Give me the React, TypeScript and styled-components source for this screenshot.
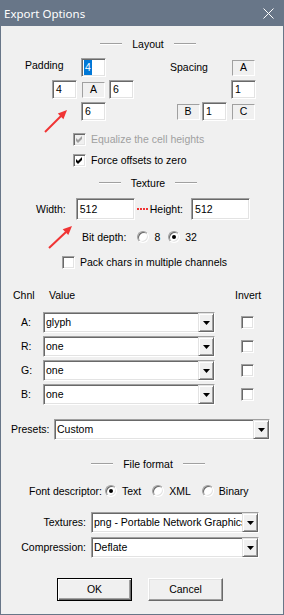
import React from "react";
import styled, { createGlobalStyle } from "styled-components";

const FRAME = "#687688";
const FACE = "#f0f0f0";
const SHADOW = "#a0a0a0";
const DARK = "#696969";
const LIGHT = "#e3e3e3";
const RED = "#f03434";

const GlobalStyle = createGlobalStyle`
  html, body { margin: 0; padding: 0; background: ${FACE}; }
  body {
    font-family: "Liberation Sans", Arial, sans-serif;
    font-size: 10.5px;
    color: #000;
  }
  * { box-sizing: border-box; }
`;

const Window = styled.div`
  position: relative;
  width: 284px;
  height: 615px;
  display: flex;
  flex-direction: column;
  overflow: hidden;
`;

const TitleBar = styled.div`
  flex: none;
  height: 26px;
  background: ${FRAME};
  display: flex;
  align-items: center;
  justify-content: space-between;
  padding: 0 10px 0 4px;
`;

const Title = styled.span`
  font-family: "Noto Sans", "Liberation Sans", sans-serif;
  font-size: 11.5px;
  color: #fff;
`;

const Body = styled.div`
  flex: 1;
  background: ${FACE};
  border: 1px solid ${FRAME};
  border-top: none;
  display: flex;
  flex-direction: column;
  line-height: 13px;
`;

const SectionHeader = styled.div<{ $mt: number }>`
  margin-top: ${(p) => p.$mt}px;
  height: 14px;
  padding-left: 12px;
  display: flex;
  align-items: center;
  justify-content: center;
  gap: 10px;
`;

const Rule = styled.span`
  width: 22px;
  height: 2px;
  border-top: 1px solid ${SHADOW};
  border-bottom: 1px solid #fff;
`;

const LayoutArea = styled.div`
  margin-top: 7px;
  height: 63px;
  padding-left: 24px;
  display: flex;
  gap: 36px;
`;

const CrossGrid = styled.div<{ $cols: string }>`
  display: grid;
  grid-template-columns: ${(p) => p.$cols};
  grid-template-rows: 19px 19px 19px;
  row-gap: 3px;
`;

const GroupLabel = styled.span<{ $cols: string; $mt: number }>`
  grid-row: 1;
  grid-column: ${(p) => p.$cols};
  align-self: start;
  margin-top: ${(p) => p.$mt}px;
`;

const sunken = `
  border: 1px solid;
  border-color: ${SHADOW} #fff #fff ${SHADOW};
  box-shadow: inset 1px 1px ${DARK}, inset -1px -1px ${LIGHT};
`;

const EditBox = styled.div<{ $w: number; $h: number; $area?: string; $ml?: number }>`
  ${(p) => (p.$area ? `grid-area: ${p.$area};` : "")}
  margin-left: ${(p) => p.$ml ?? 0}px;
  flex: none;
  width: ${(p) => p.$w}px;
  height: ${(p) => p.$h}px;
  background: #fff;
  ${sunken}
  padding-left: 3px;
  display: flex;
  align-items: center;
`;

const Selected = styled.span`
  background: #0078d7;
  color: #fff;
  height: 15px;
  line-height: 15px;
  padding: 0 1px;
  margin-left: -1px;
`;

const StaticBox = styled.div<{ $area: string }>`
  grid-area: ${(p) => p.$area};
  justify-self: center;
  align-self: center;
  width: 23px;
  height: 16px;
  border: 1px solid;
  border-color: ${SHADOW} #fff #fff ${SHADOW};
  display: flex;
  align-items: center;
  justify-content: center;
`;

const CheckRow = styled.div<{ $mt: number; $pl: number; $disabled?: boolean }>`
  margin-top: ${(p) => p.$mt}px;
  padding-left: ${(p) => p.$pl}px;
  height: 13px;
  display: flex;
  align-items: center;
  gap: 5px;
  color: ${(p) => (p.$disabled ? SHADOW : "#000")};
`;

const CheckBoxFrame = styled.span<{ $disabled?: boolean; $ml?: number }>`
  flex: none;
  margin-left: ${(p) => p.$ml ?? 0}px;
  width: 13px;
  height: 13px;
  background: ${(p) => (p.$disabled ? FACE : "#fff")};
  ${sunken}
  display: flex;
  align-items: center;
  justify-content: center;
`;

const CheckBox = ({ checked, disabled, ml }: { checked?: boolean; disabled?: boolean; ml?: number }) => (
  <CheckBoxFrame $disabled={disabled} $ml={ml}>
    {checked && (
      <svg width="7" height="7" viewBox="0 0 7 7">
        <polygon points="0,2 2,4 6,0 6,3 2,7 0,5" fill={disabled ? SHADOW : "#000"} />
      </svg>
    )}
  </CheckBoxFrame>
);

const SizeRow = styled.div`
  margin-top: 8px;
  height: 22px;
  padding-left: 35px;
  display: flex;
  align-items: center;
`;

const Label = styled.span<{ $ml?: number }>`
  margin-left: ${(p) => p.$ml ?? 0}px;
  white-space: nowrap;
`;

const Leader = styled.span`
  margin-left: 2px;
  width: 11px;
  height: 2px;
  background: repeating-linear-gradient(to right, ${RED} 0 2px, transparent 2px 3px);
`;

const RadioRow = styled.div<{ $mt: number; $pl: number }>`
  margin-top: ${(p) => p.$mt}px;
  padding-left: ${(p) => p.$pl}px;
  height: 14px;
  display: flex;
  align-items: center;
`;

const Option = styled.span<{ $ml: number }>`
  margin-left: ${(p) => p.$ml}px;
  display: flex;
  align-items: center;
  gap: 5px;
`;

const RadioDot = styled.span<{ $checked?: boolean }>`
  flex: none;
  width: 12px;
  height: 12px;
  border-radius: 50%;
  background: #fff;
  ${sunken}
  display: flex;
  align-items: center;
  justify-content: center;
  &::after {
    content: "";
    width: 4px;
    height: 4px;
    border-radius: 50%;
    background: #000;
    display: ${(p) => (p.$checked ? "block" : "none")};
  }
`;

const ChannelTable = styled.div`
  margin-top: 19px;
  padding-left: 12px;
  display: flex;
  flex-direction: column;
  gap: 3px;
`;

const ChannelHead = styled.div`
  display: grid;
  grid-template-columns: 36px 186px auto;
  height: 14px;
  align-items: center;
  margin-bottom: 7px;
`;

const ChannelRow = styled.div`
  display: grid;
  grid-template-columns: 30px 172px 26px 13px;
  height: 21px;
  align-items: center;
`;

const RowLabel = styled.span`
  padding-left: 8px;
`;

const ComboFrame = styled.div<{ $w: number }>`
  width: ${(p) => p.$w}px;
  height: 21px;
  background: #fff;
  ${sunken}
  display: flex;
  align-items: stretch;
`;

const ComboText = styled.span`
  flex: 1;
  min-width: 0;
  overflow: hidden;
  white-space: nowrap;
  padding-left: 2px;
  display: flex;
  align-items: center;
`;

const DropButton = styled.span`
  flex: none;
  width: 16px;
  background: ${FACE};
  border: 1px solid;
  border-color: ${LIGHT} ${DARK} ${DARK} ${LIGHT};
  box-shadow: inset 1px 1px #fff, inset -1px -1px ${SHADOW};
  display: flex;
  align-items: center;
  justify-content: center;
`;

const Combo = ({ w, value }: { w: number; value: string }) => (
  <ComboFrame $w={w}>
    <ComboText>{value}</ComboText>
    <DropButton>
      <svg width="7" height="4" viewBox="0 0 7 4">
        <polygon points="0,0 7,0 3.5,4" fill="#000" />
      </svg>
    </DropButton>
  </ComboFrame>
);

const FieldRow = styled.div<{ $mt: number; $pl: number; $cols: string }>`
  margin-top: ${(p) => p.$mt}px;
  padding-left: ${(p) => p.$pl}px;
  height: 21px;
  display: grid;
  grid-template-columns: ${(p) => p.$cols};
  column-gap: 5px;
  align-items: center;
`;

const FieldLabel = styled.span<{ $right?: boolean }>`
  text-align: ${(p) => (p.$right ? "right" : "left")};
  white-space: nowrap;
`;

const ButtonRow = styled.div`
  margin-top: 20px;
  padding-left: 56px;
  display: flex;
  gap: 16px;
`;

const PushButton = styled.button<{ $default?: boolean }>`
  width: 75px;
  height: 23px;
  padding: 0;
  font: inherit;
  color: #000;
  background: ${FACE};
  border: 1px solid;
  border-color: ${(p) => (p.$default ? "#000" : `#fff ${DARK} ${DARK} #fff`)};
  box-shadow: ${(p) =>
    p.$default
      ? `inset 1px 1px #fff, inset -1px -1px ${DARK}, inset -2px -2px ${SHADOW}`
      : `inset -1px -1px ${SHADOW}, inset 1px 1px ${LIGHT}`};
`;

const Annotations = styled.svg`
  position: absolute;
  left: 0;
  top: 0;
  pointer-events: none;
`;

export default function App() {
  return (
    <>
      <GlobalStyle />
      <Window>
        <TitleBar>
          <Title>Export Options</Title>
          <svg width="11" height="11" viewBox="0 0 11 11">
            <path d="M0.5 0.5 L10.5 10.5 M10.5 0.5 L0.5 10.5" stroke="#fff" strokeWidth="1" />
          </svg>
        </TitleBar>
        <Body>
          <SectionHeader $mt={11}>
            <Rule />
            <span>Layout</span>
            <Rule />
          </SectionHeader>

          <LayoutArea>
            <CrossGrid $cols="27px 25px 4px 25px 3px 25px">
              <GroupLabel $cols="1 / 4" $mt={1}>Padding</GroupLabel>
              <EditBox $w={25} $h={19} $area="1 / 4">
                <Selected>4</Selected>
              </EditBox>
              <EditBox $w={25} $h={19} $area="2 / 2">4</EditBox>
              <StaticBox $area="2 / 4">A</StaticBox>
              <EditBox $w={25} $h={19} $area="2 / 6">6</EditBox>
              <EditBox $w={25} $h={19} $area="3 / 4">6</EditBox>
            </CrossGrid>
            <CrossGrid $cols="7px 22px 3px 25px 4px 25px">
              <GroupLabel $cols="1 / 5" $mt={3}>Spacing</GroupLabel>
              <StaticBox $area="1 / 6">A</StaticBox>
              <EditBox $w={25} $h={19} $area="2 / 6">1</EditBox>
              <StaticBox $area="3 / 2">B</StaticBox>
              <EditBox $w={25} $h={19} $area="3 / 4">1</EditBox>
              <StaticBox $area="3 / 6">C</StaticBox>
            </CrossGrid>
          </LayoutArea>

          <CheckRow $mt={12} $pl={72} $disabled>
            <CheckBox checked disabled />
            <span>Equalize the cell heights</span>
          </CheckRow>
          <CheckRow $mt={8} $pl={72}>
            <CheckBox checked />
            <span>Force offsets to zero</span>
          </CheckRow>

          <SectionHeader $mt={9}>
            <Rule />
            <span>Texture</span>
            <Rule />
          </SectionHeader>

          <SizeRow>
            <Label>Width:</Label>
            <EditBox $w={59} $h={22} $ml={10}>512</EditBox>
            <Leader />
            <Label $ml={2}>Height:</Label>
            <EditBox $w={59} $h={22} $ml={8}>512</EditBox>
          </SizeRow>

          <RadioRow $mt={10} $pl={81}>
            <Label>Bit depth:</Label>
            <Option $ml={11}>
              <RadioDot />
              <span>8</span>
            </Option>
            <Option $ml={8}>
              <RadioDot $checked />
              <span>32</span>
            </Option>
          </RadioRow>

          <CheckRow $mt={12} $pl={61}>
            <CheckBox />
            <span>Pack chars in multiple channels</span>
          </CheckRow>

          <ChannelTable>
            <ChannelHead>
              <span>Chnl</span>
              <span>Value</span>
              <span>Invert</span>
            </ChannelHead>
            {[
              ["A:", "glyph"],
              ["R:", "one"],
              ["G:", "one"],
              ["B:", "one"],
            ].map(([ch, val]) => (
              <ChannelRow key={ch}>
                <RowLabel>{ch}</RowLabel>
                <Combo w={172} value={val} />
                <span />
                <CheckBox />
              </ChannelRow>
            ))}
          </ChannelTable>

          <FieldRow $mt={14} $pl={10} $cols="38px 216px">
            <FieldLabel>Presets:</FieldLabel>
            <Combo w={216} value="Custom" />
          </FieldRow>

          <SectionHeader $mt={17}>
            <Rule />
            <span>File format</span>
            <Rule />
          </SectionHeader>

          <RadioRow $mt={13} $pl={28}>
            <Label>Font descriptor:</Label>
            <Option $ml={3}>
              <RadioDot $checked />
              <span>Text</span>
            </Option>
            <Option $ml={11}>
              <RadioDot />
              <span>XML</span>
            </Option>
            <Option $ml={11}>
              <RadioDot />
              <span>Binary</span>
            </Option>
          </RadioRow>

          <FieldRow $mt={14} $pl={0} $cols="85px 168px">
            <FieldLabel $right>Textures:</FieldLabel>
            <Combo w={168} value="png - Portable Network Graphics" />
          </FieldRow>
          <FieldRow $mt={4} $pl={0} $cols="85px 168px">
            <FieldLabel $right>Compression:</FieldLabel>
            <Combo w={168} value="Deflate" />
          </FieldRow>

          <ButtonRow>
            <PushButton $default>OK</PushButton>
            <PushButton>Cancel</PushButton>
          </ButtonRow>
        </Body>

        <Annotations width="284" height="615" viewBox="0 0 284 615">
          <line x1="45" y1="132" x2="61" y2="116" stroke={RED} strokeWidth="2" />
          <polygon points="67,110 63.4,119.2 57.8,113.6" fill={RED} />
          <line x1="49" y1="248" x2="66" y2="232" stroke={RED} strokeWidth="2" />
          <polygon points="72,226 68.3,235.1 62.7,229.3" fill={RED} />
        </Annotations>
      </Window>
    </>
  );
}
